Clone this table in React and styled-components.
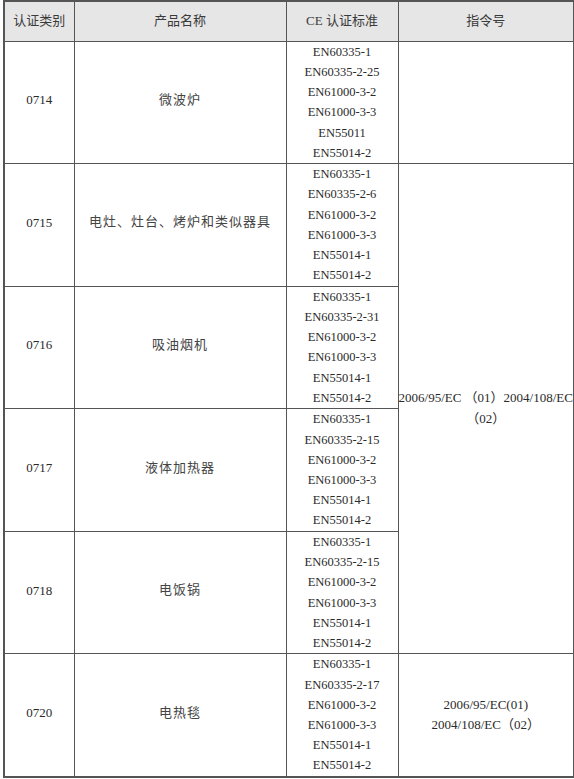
import React from "react";
import styled, { createGlobalStyle } from "styled-components";

const Global = createGlobalStyle`
  html, body { margin: 0; padding: 0; background: #ffffff; }
  body { font-family: "Liberation Serif", "Noto Sans CJK SC", serif; color: #222; }
`;

const Table = styled.table`
  border-collapse: collapse;
  table-layout: fixed;
  width: 570px;
  margin-left: 3px;
  border: 2px solid #555;
  font-family: "Liberation Serif", "Noto Sans CJK SC", serif;
  font-size: 12.5px;
`;

const Col = styled.col`
  width: ${(p) => p.$w}px;
`;

const HeadRow = styled.tr`
  height: 40px;
  background: #e6e6e6;
`;

const HeadCell = styled.th`
  border: 1px solid #555;
  font-family: "Liberation Serif", "Noto Sans CJK SC", serif;
  font-weight: normal;
  font-size: 13px;
  color: #3a3a3a;
  text-align: center;
  vertical-align: middle;
  padding: 0 0 3px 0;
`;

const Row = styled.tr`
  height: 122.6px;
`;

const Cell = styled.td`
  border: 1px solid #555;
  font-family: "Liberation Serif", "Noto Sans CJK SC", serif;
  text-align: center;
  vertical-align: middle;
  padding: 0;
  color: #2a2a2a;
`;

const NameCell = styled(Cell)`
  font-size: 13px;
  letter-spacing: 1px;
  color: #444;
  padding-bottom: 8px;
`;

const CodeCell = styled(Cell)`
  font-family: "Liberation Serif", serif;
  font-size: 13px;
  padding-bottom: 4px;
`;

const StdList = styled.div`
  display: flex;
  flex-direction: column;
  align-items: center;
  line-height: 20.2px;
  font-size: 12.5px;
`;

const DirectiveCell = styled(Cell)`
  font-size: 13px;
  line-height: 20.5px;
  white-space: nowrap;
  overflow: visible;
`;

const Line = styled.div`
  text-align: center;
  white-space: nowrap;
`;

const rows = [
  { code: "0714", name: "微波炉", stds: ["EN60335-1", "EN60335-2-25", "EN61000-3-2", "EN61000-3-3", "EN55011", "EN55014-2"] },
  { code: "0715", name: "电灶、灶台、烤炉和类似器具", stds: ["EN60335-1", "EN60335-2-6", "EN61000-3-2", "EN61000-3-3", "EN55014-1", "EN55014-2"] },
  { code: "0716", name: "吸油烟机", stds: ["EN60335-1", "EN60335-2-31", "EN61000-3-2", "EN61000-3-3", "EN55014-1", "EN55014-2"] },
  { code: "0717", name: "液体加热器", stds: ["EN60335-1", "EN60335-2-15", "EN61000-3-2", "EN61000-3-3", "EN55014-1", "EN55014-2"] },
  { code: "0718", name: "电饭锅", stds: ["EN60335-1", "EN60335-2-15", "EN61000-3-2", "EN61000-3-3", "EN55014-1", "EN55014-2"] },
  { code: "0720", name: "电热毯", stds: ["EN60335-1", "EN60335-2-17", "EN61000-3-2", "EN61000-3-3", "EN55014-1", "EN55014-2"] },
];

function directiveFor(i) {
  if (i === 0) return <Cell />;
  if (i === 1)
    return (
      <DirectiveCell rowSpan={4}>
        <Line>2006/95/EC （01）2004/108/EC</Line>
        <Line>（02）</Line>
      </DirectiveCell>
    );
  if (i === 5)
    return (
      <DirectiveCell>
        <Line>2006/95/EC(01)</Line>
        <Line>2004/108/EC（02）</Line>
      </DirectiveCell>
    );
  return null;
}

export default function App() {
  return (
    <>
      <Global />
      <Table>
        <colgroup>
          <Col $w={70} />
          <Col $w={212} />
          <Col $w={112} />
          <Col $w={176} />
        </colgroup>
        <thead>
          <HeadRow>
            <HeadCell>认证类别</HeadCell>
            <HeadCell>产品名称</HeadCell>
            <HeadCell>CE 认证标准</HeadCell>
            <HeadCell>指令号</HeadCell>
          </HeadRow>
        </thead>
        <tbody>
          {rows.map((r, i) => (
            <Row key={r.code}>
              <CodeCell>{r.code}</CodeCell>
              <NameCell>{r.name}</NameCell>
              <Cell>
                <StdList>
                  {r.stds.map((s, j) => (
                    <span key={j}>{s}</span>
                  ))}
                </StdList>
              </Cell>
              {directiveFor(i)}
            </Row>
          ))}
        </tbody>
      </Table>
    </>
  );
}
